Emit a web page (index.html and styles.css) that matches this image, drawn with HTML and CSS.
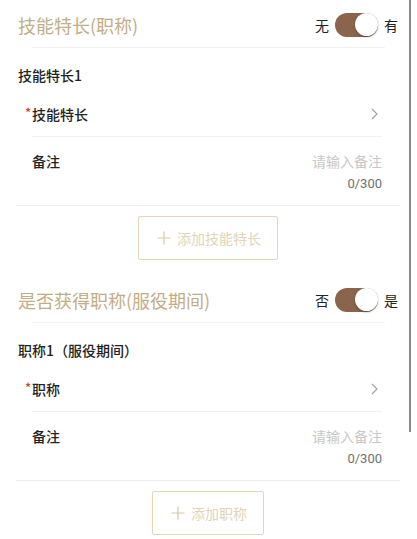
FILE: index.html
```html
<!DOCTYPE html>
<html lang="zh">
<head>
<meta charset="utf-8">
<link rel="stylesheet" href="styles.css">
</head>
<body>
<div class="page">
  <section class="section">
    <div class="header">
      <h2 class="title">技能特长(职称)</h2>
      <div class="switch">
        <span class="switch-label">无</span>
        <span class="track"><span class="knob"></span></span>
        <span class="switch-label">有</span>
      </div>
    </div>
    <div class="hr"></div>
    <div class="group">
      <div class="subtitle">技能特长1</div>
      <div class="field">
        <span class="label"><span class="req">*</span>技能特长</span>
        <svg class="chev" width="7" height="12" viewBox="0 0 7 12"><polyline points="1,1 6,6 1,11" fill="none" stroke="#a0a0a0" stroke-width="1.1"/></svg>
      </div>
      <div class="remark">
        <div class="remark-line">
          <span class="label">备注</span>
          <span class="placeholder">请输入备注</span>
        </div>
        <div class="count">0/300</div>
      </div>
    </div>
    <div class="add-wrap">
      <button class="add-btn">
        <svg class="plus" width="14" height="14" viewBox="0 0 14 14"><path d="M7 0.5V13.5M0.5 7H13.5" stroke="#d8c79f" stroke-width="1.2" fill="none"/></svg>
        <span>添加技能特长</span>
      </button>
    </div>
  </section>

  <section class="section">
    <div class="header">
      <h2 class="title">是否获得职称(服役期间)</h2>
      <div class="switch">
        <span class="switch-label">否</span>
        <span class="track"><span class="knob"></span></span>
        <span class="switch-label">是</span>
      </div>
    </div>
    <div class="hr"></div>
    <div class="group">
      <div class="subtitle">职称1（服役期间）</div>
      <div class="field">
        <span class="label"><span class="req">*</span>职称</span>
        <svg class="chev" width="7" height="12" viewBox="0 0 7 12"><polyline points="1,1 6,6 1,11" fill="none" stroke="#a0a0a0" stroke-width="1.1"/></svg>
      </div>
      <div class="remark">
        <div class="remark-line">
          <span class="label">备注</span>
          <span class="placeholder">请输入备注</span>
        </div>
        <div class="count">0/300</div>
      </div>
    </div>
    <div class="add-wrap">
      <button class="add-btn">
        <svg class="plus" width="14" height="14" viewBox="0 0 14 14"><path d="M7 0.5V13.5M0.5 7H13.5" stroke="#d8c79f" stroke-width="1.2" fill="none"/></svg>
        <span>添加职称</span>
      </button>
    </div>
  </section>
</div>
<div class="scrollbar"></div>
</body>
</html>
```
FILE: styles.css
```css
* { box-sizing: border-box; }
html, body {
  margin: 0;
  padding: 0;
  background: #fff;
}
body {
  font-family: "Noto Sans CJK SC", "Noto Sans", sans-serif;
  color: #222;
  overflow: hidden;
}
.page {
  width: 417px;
}
.section {
  padding: 0 17px 0 16px;
}
.header {
  height: 47px;
  display: flex;
  align-items: center;
  justify-content: space-between;
  padding: 2px 2px 0 2px;
}
.title {
  margin: 0;
  font-size: 18px;
  font-weight: 400;
  color: #c2ad86;
  line-height: 24px;
}
.switch {
  display: flex;
  align-items: center;
  gap: 6px;
}
.switch-label {
  font-size: 14px;
  color: #222;
  line-height: 20px;
}
.track {
  width: 43px;
  height: 24px;
  border-radius: 12px;
  background: #8a644c;
  display: flex;
  align-items: center;
  justify-content: flex-end;
}
.knob {
  width: 23px;
  height: 23px;
  border-radius: 50%;
  background: #fff;
  box-shadow: 0 1px 2px rgba(0,0,0,0.35);
}
.hr {
  height: 1px;
  background: #f2f2f2;
  margin: 0 15px 0 16px;
}
.group {
  border-bottom: 1px solid #ededed;
}
.subtitle {
  padding: 17px 2px 7px;
  font-size: 14px;
  line-height: 20px;
  font-weight: 500;
  color: #222;
}
.field {
  height: 45px;
  margin: 0 18px 0 16px;
  border-bottom: 1px solid #f0f0f0;
  display: flex;
  align-items: center;
  justify-content: space-between;
  padding-right: 4px;
  padding-bottom: 1px;
}
.label {
  font-size: 14px;
  line-height: 20px;
  font-weight: 500;
  color: #222;
}
.req {
  display: inline-block;
  width: 7px;
  margin-left: -7px;
  color: #e8382c;
  font-size: 13px;
  vertical-align: 2px;
}
.chev {
  display: block;
}
.remark {
  margin: 0 18px 0 16px;
  padding: 14px 0 13px;
}
.remark-line {
  display: flex;
  justify-content: space-between;
  align-items: center;
  height: 20px;
}
.placeholder {
  font-size: 14px;
  line-height: 20px;
  color: #c8c8c8;
}
.count {
  margin-top: 5px;
  text-align: right;
  font-family: Roboto, "Noto Sans", sans-serif;
  font-size: 13px;
  font-weight: 400;
  line-height: 16px;
  color: #707070;
}
.add-wrap {
  display: flex;
  justify-content: center;
  padding: 10px 0 15px;
}
.add-btn {
  height: 44px;
  display: flex;
  align-items: center;
  gap: 6px;
  padding: 0 16px 0 18px;
  background: #fff;
  border: 1px solid #e5d7b3;
  border-radius: 2px;
  font-family: "Noto Sans CJK SC", sans-serif;
  font-size: 14px;
  color: #e2d5b6;
}
.plus {
  display: block;
}
.scrollbar {
  position: fixed;
  left: 409px;
  top: 0;
  width: 2px;
  height: 432px;
  background: #8a8a8a;
}
```
